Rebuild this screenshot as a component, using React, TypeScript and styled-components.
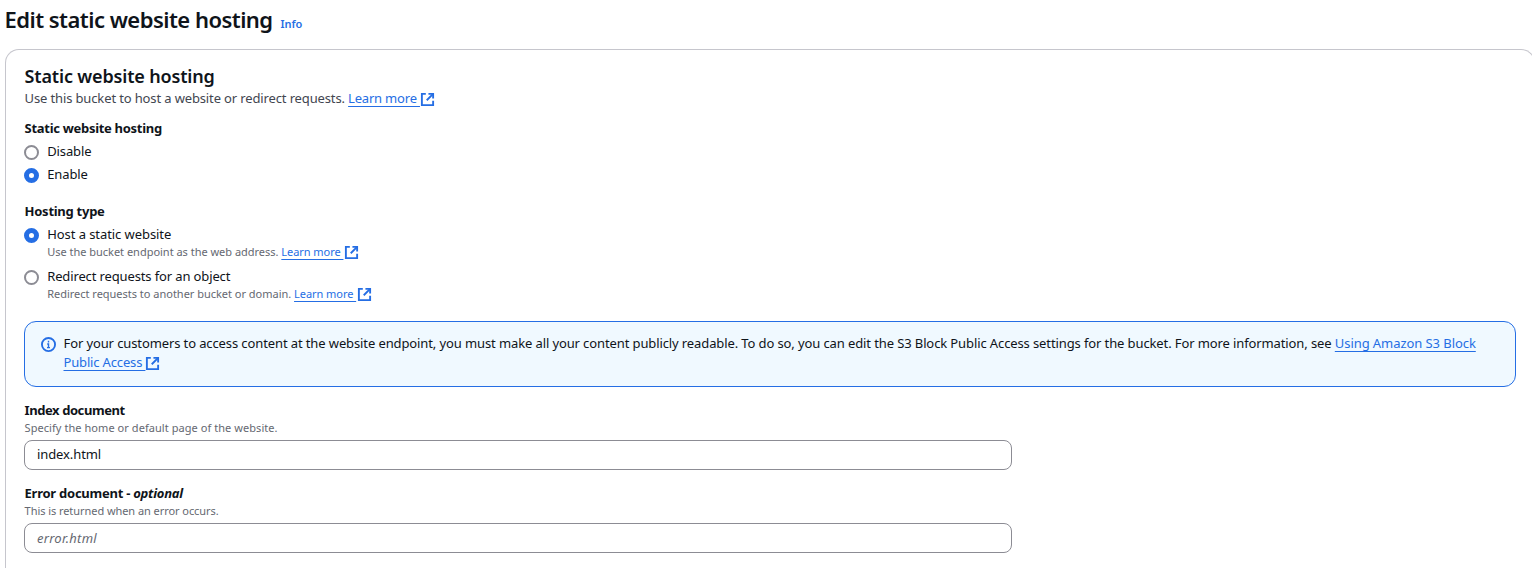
import React from 'react';
import styled, { createGlobalStyle } from 'styled-components';

const BLUE = '#256ee4';

const GlobalStyle = createGlobalStyle`
  *, *::before, *::after { box-sizing: border-box; }
  html, body { margin: 0; background: #fff; }
  body {
    font-family: "Noto Sans", sans-serif;
    font-size: 13px;
    line-height: 18px;
    color: #0f141a;
    white-space: nowrap;
  }
`;

interface Tracked { $track?: number }

const Page = styled.main`
  display: flex;
  flex-direction: column;
  height: 568px;
  overflow: hidden;
`;

const Text = styled.span<Tracked>`
  letter-spacing: ${(p) => p.$track ?? 0}px;
`;

const PageHeader = styled.header`
  display: flex;
  flex: none;
  align-items: baseline;
  padding: 4px 0 0 4.5px;
`;

const PageTitle = styled.h1`
  margin: 0;
  font-size: 22px;
  line-height: 30px;
  font-weight: 600;
  letter-spacing: -0.53px;
`;

const InfoLink = styled.a`
  margin-left: 8px;
  font-size: 11px;
  line-height: 15px;
  font-weight: 600;
  letter-spacing: -0.1px;
  color: ${BLUE};
`;

const Card = styled.section`
  flex: 1;
  width: 1530px;
  margin: 15px 0 0 5px;
  padding: 14px 18px 0;
  border: 1px solid #c6c6cd;
  border-bottom: 0;
  border-radius: 14px 14px 0 0;
  text-indent: 0.6px;
`;

const CardTitle = styled.h2`
  margin: 0 0 1px;
  font-size: 18px;
  line-height: 24px;
  font-weight: 600;
  letter-spacing: -0.165px;
`;

const CardDescription = styled.p`
  margin: 0;
  height: 18px;
  color: #424650;
`;

const Field = styled.div<{ $gap: number }>`
  margin-top: ${(p) => p.$gap}px;
`;

const Label = styled.div<Tracked>`
  font-weight: 700;
  letter-spacing: ${(p) => p.$track ?? -0.3}px;
`;

const Hint = styled.div<Tracked>`
  height: 15px;
  margin-top: 1px;
  font-size: 11px;
  line-height: 15px;
  letter-spacing: ${(p) => p.$track ?? 0}px;
  color: #656871;
`;

const Option = styled.div<{ $gap: number }>`
  display: flex;
  align-items: flex-start;
  gap: 8px;
  margin-top: ${(p) => p.$gap}px;
  text-indent: 0.2px;
`;

const Radio = styled.span<{ $checked?: boolean }>`
  flex: none;
  width: 15px;
  height: 15px;
  margin-top: 3px;
  border-radius: 50%;
  border: ${(p) => (p.$checked ? `5px solid ${BLUE}` : '2px solid #8c8c94')};
  background: #fff;
`;

const Link = styled.a<Tracked>`
  color: ${BLUE};
  letter-spacing: ${(p) => p.$track ?? 0}px;
  text-decoration: underline 1px;
  text-underline-offset: 3px;
  text-decoration-skip-ink: none;
`;

const Glyph = styled.svg<{ $shift?: number }>`
  width: 15px;
  height: 15px;
  margin-left: ${(p) => p.$shift ?? 0}px;
  vertical-align: -4px;
  fill: none;
  stroke: ${BLUE};
  stroke-width: 2;
`;

const Alert = styled.div`
  display: flex;
  gap: 7.5px;
  height: 66px;
  margin-top: 20px;
  padding: 12px 16px;
  border: 1px solid ${BLUE};
  border-radius: 12px;
  background: #f0f9ff;
  text-indent: 0;
`;

const AlertIcon = styled.svg`
  flex: none;
  width: 15px;
  height: 15px;
  margin-top: 3px;
  fill: none;
  stroke: ${BLUE};
  stroke-width: 2;
`;

const AlertText = styled.p`
  margin: 0;
  line-height: 19px;
`;

const Input = styled.input<Tracked & { $rise?: number }>`
  display: block;
  width: 988px;
  height: 30px;
  margin-top: 5px;
  padding: 0 12px ${(p) => p.$rise ?? 1}px;
  border: 1px solid #8c8c94;
  border-radius: 8px;
  background: #fff;
  font: inherit;
  letter-spacing: ${(p) => p.$track ?? 0}px;
  color: #0f141a;
  &::placeholder {
    color: #656871;
    opacity: 1;
    font-style: italic;
  }
`;

const ExternalIcon = ({ shift }: { shift?: number }) => (
  <Glyph viewBox="0 0 16 16" $shift={shift}>
    <path d="M9 2h5v5" />
    <path d="m7.2 8.8 6.8-6.8" />
    <path d="M14 9.4V14H2V2h4.2" />
  </Glyph>
);

export default function App() {
  return (
    <Page>
      <GlobalStyle />
      <PageHeader>
        <PageTitle>Edit static website hosting</PageTitle>
        <InfoLink>Info</InfoLink>
      </PageHeader>
      <Card>
        <CardTitle>Static website hosting</CardTitle>
        <CardDescription>
          <Text $track={-0.135}>Use this bucket to host a website or redirect requests. </Text>
          <Link $track={-0.2}>Learn more&nbsp;</Link>
          <ExternalIcon />
        </CardDescription>

        <Field $gap={12}>
          <Label>Static website hosting</Label>
          <Option $gap={5}>
            <Radio />
            <Text $track={-0.12}>Disable</Text>
          </Option>
          <Option $gap={5}>
            <Radio $checked />
            <Text $track={-0.12}>Enable</Text>
          </Option>
        </Field>

        <Field $gap={19}>
          <Label $track={-0.27}>Hosting type</Label>
          <Option $gap={5}>
            <Radio $checked />
            <div>
              <Text $track={-0.07}>Host a static website</Text>
              <Hint $track={-0.015}>
                Use the bucket endpoint as the web address. <Link $track={-0.05}>Learn more&nbsp;</Link>
                <ExternalIcon shift={1} />
              </Hint>
            </div>
          </Option>
          <Option $gap={8}>
            <Radio />
            <div>
              <Text $track={-0.13}>Redirect requests for an object</Text>
              <Hint $track={-0.015}>
                Redirect requests to another bucket or domain. <Link $track={-0.05}>Learn more&nbsp;</Link>
                <ExternalIcon shift={1} />
              </Hint>
            </div>
          </Option>
        </Field>

        <Alert>
          <AlertIcon viewBox="0 0 16 16">
            <circle cx="8" cy="8" r="7" />
            <path d="M8 11.5V7.5H6.6M8 4v1.8M6.4 11.3h3.2" strokeWidth="1.5" />
          </AlertIcon>
          <AlertText>
            <Text $track={-0.11}>
              For your customers to access content at the website endpoint, you must make all your content publicly
              readable. To do so, you can edit the S3 Block Public Access settings for the bucket. For more
              information, see{' '}
            </Text>
            <Link $track={-0.07}>Using Amazon S3 Block</Link>
            <br />
            <Link $track={-0.16}>Public Access&nbsp;</Link>
            <ExternalIcon />
          </AlertText>
        </Alert>

        <Field $gap={14}>
          <Label $track={-0.43}>Index document</Label>
          <Hint $track={0.058}>Specify the home or default page of the website.</Hint>
          <Input $track={-0.1} $rise={2} defaultValue="index.html" />
        </Field>

        <Field $gap={14}>
          <Label $track={-0.25}>
            Error document - <i>optional</i>
          </Label>
          <Hint $track={-0.06}>This is returned when an error occurs.</Hint>
          <Input $track={0.25} placeholder="error.html" />
        </Field>
      </Card>
    </Page>
  );
}
